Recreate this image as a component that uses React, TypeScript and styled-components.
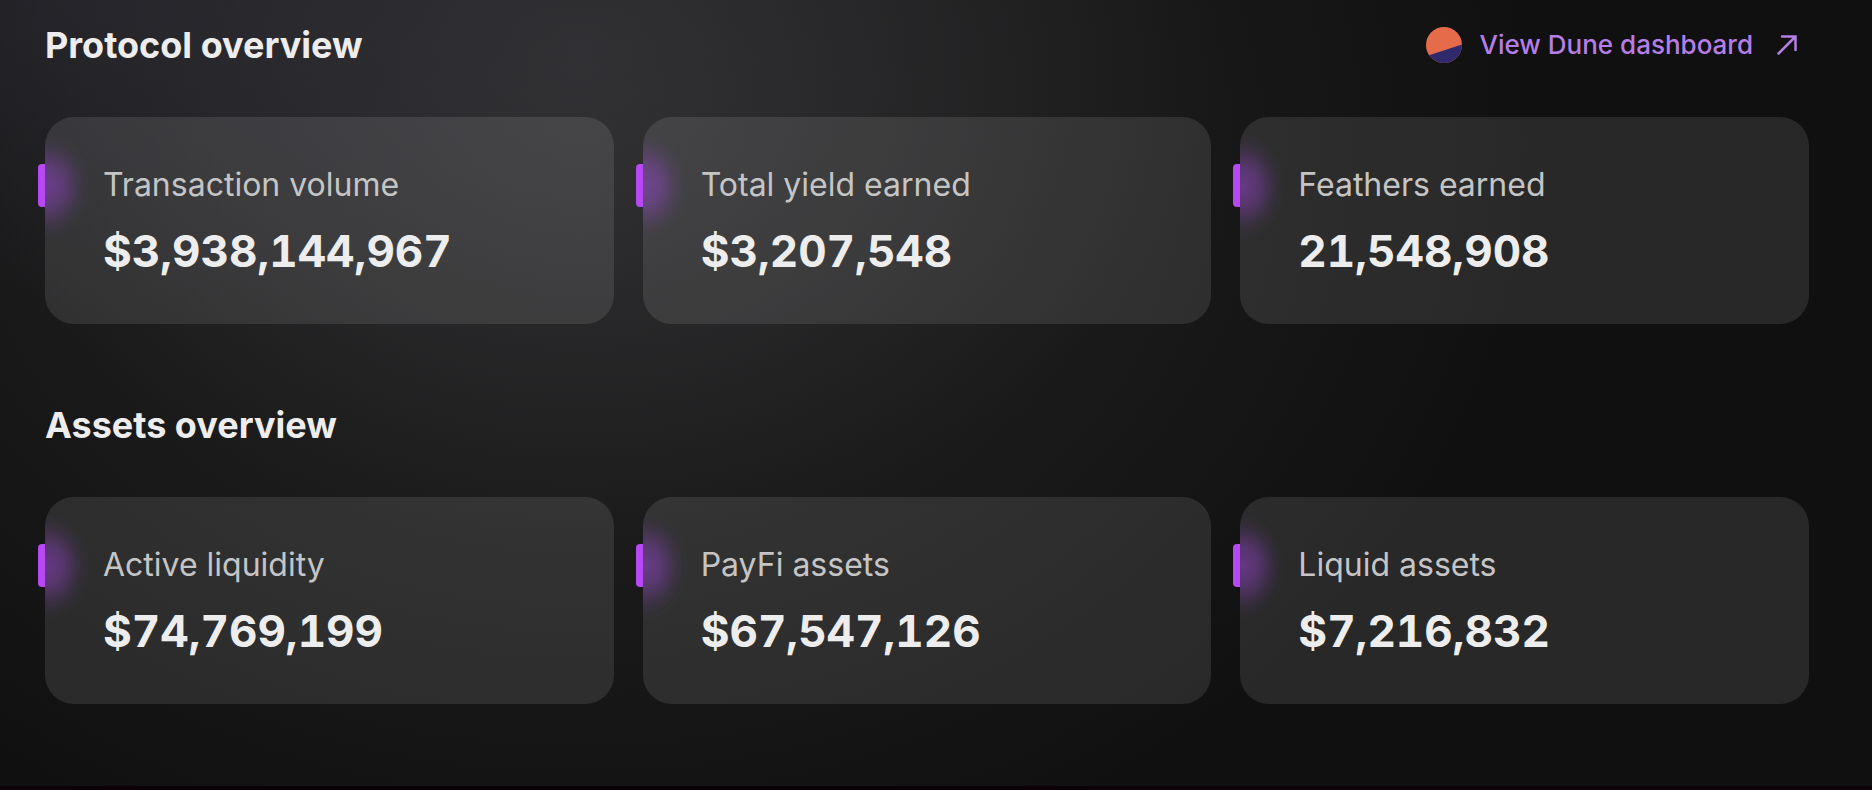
import React from 'react';
import styled, { createGlobalStyle } from 'styled-components';

const GlobalStyle = createGlobalStyle`
  *, *::before, *::after { box-sizing: border-box; }
  body {
    margin: 0;
    background: #101010;
    font-family: Inter, "Liberation Sans", sans-serif;
    color: #ededee;
  }
`;

const Page = styled.main`
  min-height: 100vh;
  padding: 20px 63px 40px 45px;
  border-bottom: 4px solid #080206;
  background:
    radial-gradient(ellipse 36% 40% at 4% 0%, rgba(48, 48, 60, 0.42), transparent),
    radial-gradient(ellipse 34% 62% at 31% 6%, rgba(66, 66, 70, 0.42), transparent),
    radial-gradient(ellipse 52% 100% at 31% 18%, rgba(50, 50, 52, 0.66), transparent),
    linear-gradient(#101010, #101010);
`;

const Section = styled.section`
  display: flex;
  flex-direction: column;
  gap: 47px;
  & + & { margin-top: 76px; }
`;

const SectionHeader = styled.header`
  display: flex;
  align-items: center;
  justify-content: space-between;
  min-height: 50px;
`;

const Title = styled.h2`
  margin: 0;
  font-size: 36px;
  line-height: 50px;
  font-weight: 700;
`;

const DuneLink = styled.a`
  display: flex;
  align-items: center;
  gap: 18px;
  padding-right: 12px;
  color: #b57ee6;
  font-size: 26px;
  line-height: 36px;
  font-weight: 500;
  text-decoration: none;
`;

const ArrowIcon = styled.svg`
  margin-left: 6px;
`;

const Cards = styled.dl`
  display: grid;
  grid-template-columns: repeat(3, 1fr);
  gap: 29px;
  margin: 0;
`;

const Card = styled.div`
  position: relative;
  padding: 46px 58px;
  border-radius: 29px;
  background:
    radial-gradient(ellipse 42px 54px at 3px 69px, rgba(168, 72, 232, 0.46), rgba(168, 72, 232, 0.34) 35%, rgba(168, 72, 232, 0.1) 70%, rgba(168, 72, 232, 0.03) 86%, transparent),
    rgba(255, 255, 255, 0.1);

  &::before {
    content: '';
    position: absolute;
    top: 47px;
    left: -7px;
    width: 7px;
    height: 43px;
    border-radius: 4px 0 0 4px;
    background: #b848f5;
  }
`;

const Label = styled.dt`
  font-size: 32px;
  line-height: 44px;
  color: #c5c5c6;
`;

const Value = styled.dd`
  margin: 18px 0 0;
  font-size: 44px;
  line-height: 53px;
  font-weight: 700;
  font-variant-numeric: tabular-nums;
`;

const DuneLogo = () => (
  <svg width="36" height="36" viewBox="0 0 36 36" aria-hidden="true">
    <clipPath id="dune-disc">
      <circle cx="18" cy="18" r="18" />
    </clipPath>
    <g clipPath="url(#dune-disc)">
      <rect width="36" height="36" fill="#e56b4a" />
      <path d="M0 29.3L36 17.5V36H0Z" fill="#30296b" />
    </g>
  </svg>
);

type Stat = { label: string; value: string };

const protocolStats: Stat[] = [
  { label: 'Transaction volume', value: '$3,938,144,967' },
  { label: 'Total yield earned', value: '$3,207,548' },
  { label: 'Feathers earned', value: '21,548,908' },
];

const assetStats: Stat[] = [
  { label: 'Active liquidity', value: '$74,769,199' },
  { label: 'PayFi assets', value: '$67,547,126' },
  { label: 'Liquid assets', value: '$7,216,832' },
];

const StatCards = ({ stats }: { stats: Stat[] }) => (
  <Cards>
    {stats.map((stat) => (
      <Card key={stat.label}>
        <Label>{stat.label}</Label>
        <Value>{stat.value}</Value>
      </Card>
    ))}
  </Cards>
);

export default function App() {
  return (
    <>
      <GlobalStyle />
      <Page>
        <Section>
          <SectionHeader>
            <Title>Protocol overview</Title>
            <DuneLink href="#dune">
              <DuneLogo />
              View Dune dashboard
              <ArrowIcon width="20" height="20" viewBox="0 0 20 20" fill="none" stroke="currentColor" strokeWidth="2.5" strokeLinecap="round" aria-hidden="true">
                <path d="M1.5 18.5L18 2M5 1.5H18.5V15" />
              </ArrowIcon>
            </DuneLink>
          </SectionHeader>
          <StatCards stats={protocolStats} />
        </Section>
        <Section>
          <SectionHeader>
            <Title>Assets overview</Title>
          </SectionHeader>
          <StatCards stats={assetStats} />
        </Section>
      </Page>
    </>
  );
}
